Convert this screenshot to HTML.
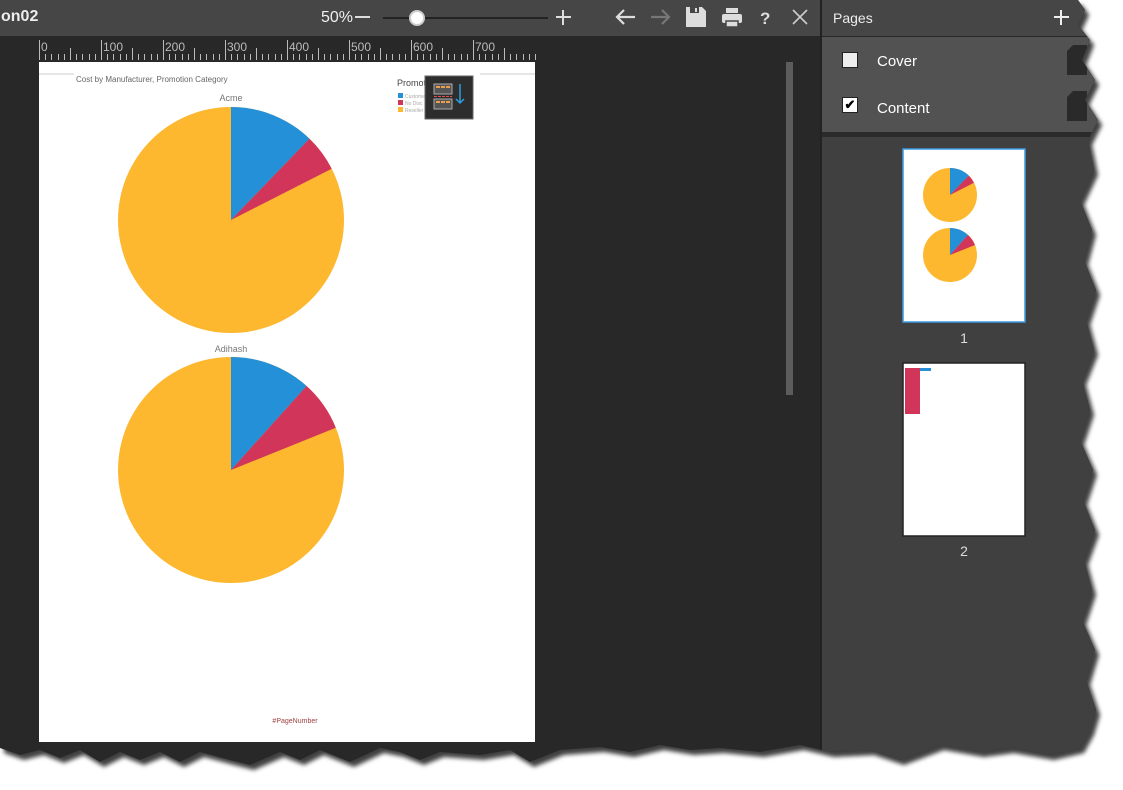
<!DOCTYPE html>
<html><head><meta charset="utf-8"><style>
*{margin:0;padding:0;box-sizing:border-box}
body{width:1123px;height:790px;background:#fff;overflow:hidden;font-family:"Liberation Sans",sans-serif;position:relative}
#wrap{position:absolute;left:0;top:0;width:1123px;height:790px;filter:drop-shadow(4px 5px 2px rgba(0,0,0,.75))}
#app{position:absolute;left:0;top:0;width:1123px;height:790px;background:#282828;
clip-path:polygon(0 0,1078px 0,1085px 10px,1078px 25px,1090px 40px,1082px 60px,1095px 80px,1085px 100px,1098px 120px,1088px 140px,1094px 170px,1080px 200px,1092px 230px,1084px 260px,1096px 290px,1086px 320px,1094px 350px,1082px 380px,1090px 410px,1080px 440px,1093px 470px,1083px 500px,1095px 530px,1084px 560px,1092px 590px,1082px 620px,1095px 650px,1086px 680px,1096px 710px,1090px 730px,1080px 748px,1050px 755px,1010px 748px,980px 752px,940px 745px,900px 760px,870px 750px,830px 752px,800px 745px,760px 752px,720px 748px,690px 750px,660px 745px,630px 752px,600px 747px,560px 750px,530px 762px,510px 750px,480px 755px,440px 752px,420px 760px,400px 752px,380px 748px,350px 762px,320px 750px,300px 760px,280px 752px,250px 765px,230px 760px,200px 752px,180px 762px,160px 752px,140px 760px,120px 752px,100px 762px,80px 750px,60px 758px,40px 750px,20px 755px,0 748px)}
.abs{position:absolute}
.tb{left:0;top:0;width:822px;height:36px;background:#464646}
.w{color:#fff}
</style></head><body>
<div id="wrap"><div id="app">
<div class="abs tb"></div>
<div class="abs w" style="left:1px;top:8px;font-size:16px;font-weight:bold;color:#eee">on02</div>
<div class="abs w" style="left:321px;top:9px;font-size:16px;color:#f0f0f0">50%</div>
<div class="abs" style="left:355px;top:16px;width:15px;height:2px;background:#ddd"></div>
<div class="abs" style="left:383px;top:17px;width:165px;height:2px;background:#222"></div>
<div class="abs" style="left:409px;top:10px;width:16px;height:16px;border-radius:50%;background:#fff;border:2px solid #ccc"></div>
<div class="abs" style="left:556px;top:16px;width:15px;height:2px;background:#ddd"></div>
<div class="abs" style="left:562px;top:10px;width:2px;height:15px;background:#ddd"></div>
<svg class="abs" style="left:610px;top:4px" width="210" height="28">
<g stroke="#ddd" stroke-width="2.2" fill="none"><path d="M7 13h18M14 6l-7 7 7 7"/></g>
<g stroke="#777" stroke-width="2.2" fill="none"><path d="M41 13h18M52 6l7 7-7 7"/></g>
<path d="M76 3h16l4 4v16h-20z" fill="#ddd"/><rect x="80" y="3" width="9" height="6" fill="#464646"/><rect x="85" y="4" width="2" height="4" fill="#ddd"/>
<rect x="116" y="4" width="12" height="5" fill="#ddd"/><rect x="112" y="10" width="20" height="9" rx="2" fill="#ddd"/><rect x="116" y="17" width="12" height="6" fill="#ddd" stroke="#464646" stroke-width="1.5"/>
<text x="150" y="20" font-size="17" font-weight="bold" fill="#ddd" font-family="Liberation Sans">?</text>
<path d="M183 6l14 14M197 6l-14 14" stroke="#ccc" stroke-width="1.6"/>
</svg>
<svg class="abs" style="left:0;top:36px" width="540" height="26">
<g stroke="#bbb" stroke-width="1">
<path d="M39.5 4v20M101.5 4v20M163.5 4v20M225.5 4v20M287.5 4v20M349.5 4v20M411.5 4v20M473.5 4v20M70.5 12v12M132.5 12v12M194.5 12v12M256.5 12v12M318.5 12v12M380.5 12v12M442.5 12v12M504.5 12v12"/>
<path d="M45.5 18v6M51.5 18v6M58.5 18v6M64.5 18v6M76.5 18v6M82.5 18v6M89.5 18v6M95.5 18v6M107.5 18v6M113.5 18v6M120.5 18v6M126.5 18v6M138.5 18v6M144.5 18v6M151.5 18v6M157.5 18v6M169.5 18v6M175.5 18v6M182.5 18v6M188.5 18v6M200.5 18v6M206.5 18v6M213.5 18v6M219.5 18v6M231.5 18v6M237.5 18v6M244.5 18v6M250.5 18v6M262.5 18v6M268.5 18v6M275.5 18v6M281.5 18v6M293.5 18v6M299.5 18v6M306.5 18v6M312.5 18v6M324.5 18v6M330.5 18v6M337.5 18v6M343.5 18v6M355.5 18v6M361.5 18v6M368.5 18v6M374.5 18v6M386.5 18v6M392.5 18v6M399.5 18v6M405.5 18v6M417.5 18v6M423.5 18v6M430.5 18v6M436.5 18v6M448.5 18v6M454.5 18v6M461.5 18v6M467.5 18v6M479.5 18v6M485.5 18v6M492.5 18v6M498.5 18v6M510.5 18v6M516.5 18v6M523.5 18v6M529.5 18v6M535.5 18v6"/>
</g>
<g font-size="12" fill="#bbb" font-family="Liberation Sans"><text x="41" y="15">0</text><text x="103" y="15">100</text><text x="165" y="15">200</text><text x="227" y="15">300</text><text x="289" y="15">400</text><text x="351" y="15">500</text><text x="413" y="15">600</text><text x="475" y="15">700</text></g>
</svg>
<div class="abs" style="left:39px;top:62px;width:496px;height:680px;background:#fff"></div>
<svg class="abs" style="left:0;top:0" width="540" height="745">
<path d="M39 74h35M480 74h55" stroke="#ccc"/>
<text x="76" y="82" font-size="8" fill="#666" font-family="Liberation Sans">Cost by Manufacturer, Promotion Category</text>
<text x="231" y="101" font-size="9" fill="#777" text-anchor="middle" font-family="Liberation Sans">Acme</text>
<text x="231" y="352" font-size="9" fill="#777" text-anchor="middle" font-family="Liberation Sans">Adihash</text>
<circle cx="231" cy="220" r="113" fill="#fdb830"/>
<path d="M231 220V107A113 113 0 0 1 309.5 138.7Z" fill="#2490d8"/>
<path d="M231 220L309.5 138.7A113 113 0 0 1 331.7 168.7Z" fill="#d1365a"/>
<circle cx="231" cy="470" r="113" fill="#fdb830"/>
<path d="M231 470V357A113 113 0 0 1 306.6 386Z" fill="#2490d8"/>
<path d="M231 470L306.6 386A113 113 0 0 1 335.8 427.7Z" fill="#d1365a"/>
<text x="397" y="86" font-size="9" fill="#444" font-family="Liberation Sans">Promotion Cat...</text>
<rect x="398" y="93" width="5" height="5" fill="#2490d8"/><rect x="398" y="100" width="5" height="5" fill="#d1365a"/><rect x="398" y="107" width="5" height="5" fill="#fdb830"/>
<g font-size="5" fill="#aaa" font-family="Liberation Sans"><text x="405" y="98">Customer</text><text x="405" y="105">No Disc</text><text x="405" y="112">Reseller</text></g>
<rect x="425" y="76" width="48" height="43" fill="#2d2d2d" stroke="#666"/>
<rect x="434" y="84" width="18" height="10" fill="#555" stroke="#aaa"/><rect x="434" y="99" width="18" height="10" fill="#555" stroke="#aaa"/>
<g fill="#e8a050"><rect x="436" y="86" width="4" height="2"/><rect x="441" y="86" width="4" height="2"/><rect x="446" y="86" width="4" height="2"/><rect x="436" y="101" width="4" height="2"/><rect x="441" y="101" width="4" height="2"/><rect x="446" y="101" width="4" height="2"/></g>
<path d="M434 96.5h18" stroke="#e05050" stroke-dasharray="3 1"/>
<path d="M460 84v19M456 99l4 4 4-4" stroke="#2aa0e0" stroke-width="1.5" fill="none"/>
<text x="295" y="723" font-size="7" fill="#a04040" text-anchor="middle" font-family="Liberation Sans">#PageNumber</text>
</svg>
<div class="abs" style="left:786px;top:62px;width:7px;height:333px;background:#5c5c5c"></div>
<div class="abs" style="left:820px;top:0;width:2px;height:790px;background:#222"></div>
<div class="abs" style="left:822px;top:0;width:301px;height:36px;background:#464646"></div>
<div class="abs" style="left:822px;top:37px;width:301px;height:95px;background:#525252"></div>
<div class="abs" style="left:822px;top:132px;width:301px;height:5px;background:#2a2a2a"></div>
<div class="abs" style="left:822px;top:137px;width:301px;height:653px;background:#404040"></div>
<div class="abs w" style="left:833px;top:10px;font-size:14px;color:#eee">Pages</div>
<div class="abs" style="left:1054px;top:16px;width:15px;height:2px;background:#eee"></div>
<div class="abs" style="left:1060px;top:10px;width:2px;height:15px;background:#eee"></div>
<div class="abs" style="left:842px;top:52px;width:16px;height:16px;background:#eee;border:1px solid #222"></div>
<div class="abs" style="left:842px;top:97px;width:16px;height:16px;background:#fff;border:1px solid #222;font-size:13px;line-height:13px;text-align:center;font-weight:bold">✔</div>
<div class="abs w" style="left:877px;top:53px;font-size:15px">Cover</div>
<div class="abs w" style="left:877px;top:100px;font-size:15px">Content</div>
<svg class="abs" style="left:1066px;top:45px" width="30" height="80"><path d="M7 0h14v30h-20v-24z" fill="#2a2a2a"/><path d="M7 46h14v30h-20v-24z" fill="#2a2a2a"/></svg>
<svg class="abs" style="left:902px;top:148px" width="125" height="410">
<rect x="1" y="1" width="122" height="173" fill="#fff" stroke="#3c9be0" stroke-width="1.5"/>
<circle cx="48" cy="47" r="27" fill="#fdb830"/><path d="M48 47V20A27 27 0 0 1 66.8 27.6Z" fill="#2490d8"/><path d="M48 47L66.8 27.6A27 27 0 0 1 72 34.7Z" fill="#d1365a"/>
<circle cx="48" cy="107" r="27" fill="#fdb830"/><path d="M48 107V80A27 27 0 0 1 66 87Z" fill="#2490d8"/><path d="M48 107L66 87A27 27 0 0 1 73 97Z" fill="#d1365a"/>
<text x="62" y="195" font-size="14" fill="#ddd" text-anchor="middle" font-family="Liberation Sans">1</text>
<rect x="1" y="215" width="122" height="173" fill="#fff" stroke="#222" stroke-width="1.5"/>
<rect x="3" y="220" width="15" height="46" fill="#d1365a"/><rect x="18" y="220" width="11" height="3" fill="#2490d8"/>
<text x="62" y="408" font-size="14" fill="#ddd" text-anchor="middle" font-family="Liberation Sans">2</text>
</svg>
</div></div>
</body></html>
